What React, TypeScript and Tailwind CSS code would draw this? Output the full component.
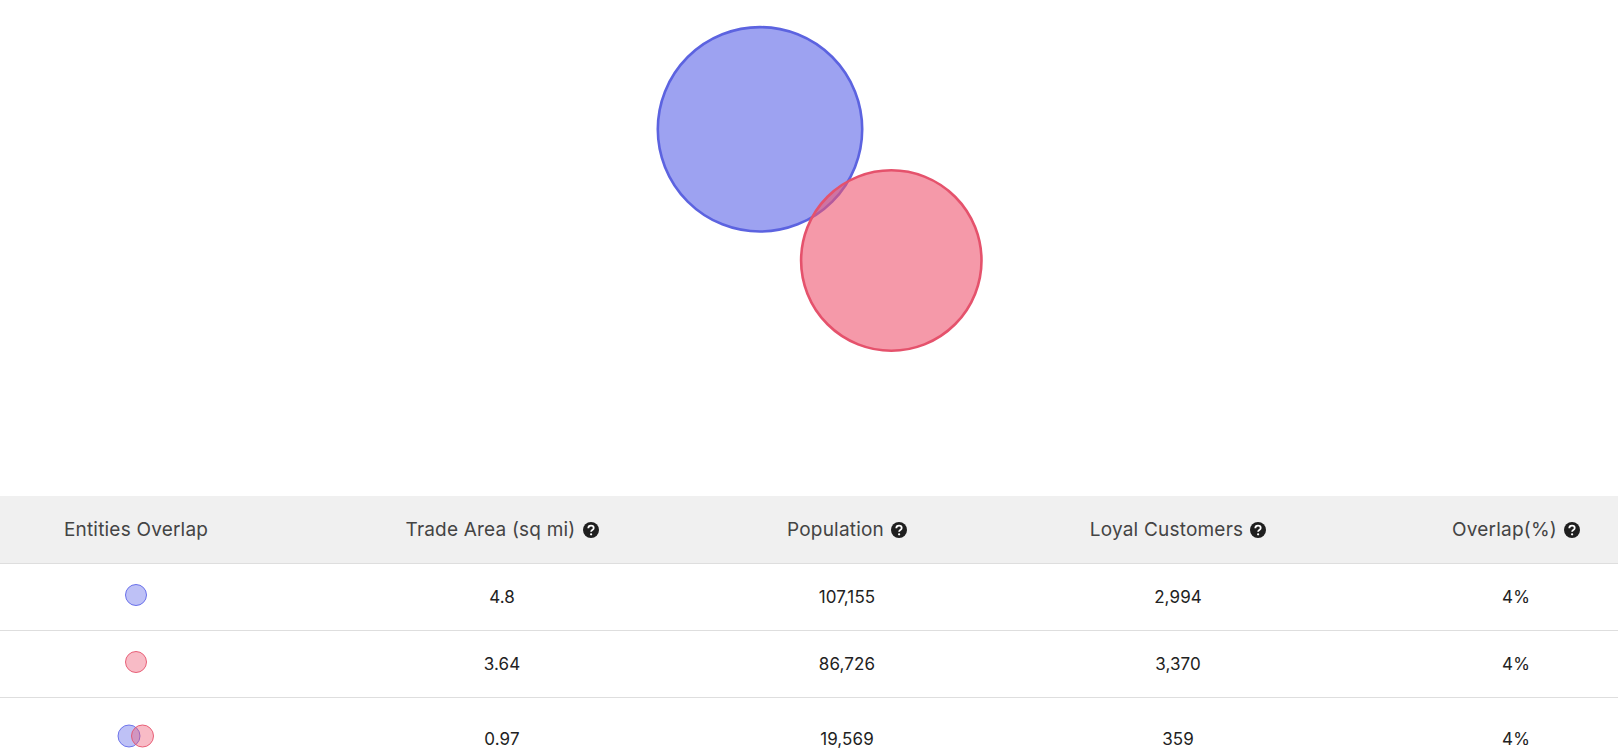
const columns = [
  { label: "Entities Overlap" },
  { label: "Trade Area (sq mi)", help: true },
  { label: "Population", help: true },
  { label: "Loyal Customers", help: true },
  { label: "Overlap(%)", help: true, last: true },
];

const rows = [
  { kind: "blue", area: "4.8", population: "107,155", loyal: "2,994", overlap: "4%" },
  { kind: "red", area: "3.64", population: "86,726", loyal: "3,370", overlap: "4%" },
  { kind: "both", area: "0.97", population: "19,569", loyal: "359", overlap: "4%" },
];

const gridCols = "grid grid-cols-[272px_460px_230px_432px_224px]";

function HelpIcon() {
  return (
    <svg viewBox="0 0 16 16" className="block size-4">
      <circle cx="8" cy="8" r="8" fill="#1f1f1f" />
      <path
        d="M5.3 6.2C5.3 4.6 6.5 3.7 8 3.7s2.7.9 2.7 2.3c0 1.1-.7 1.6-1.4 2.1-.7.5-1.2.9-1.2 1.7"
        fill="none"
        stroke="#ffffff"
        strokeWidth="1.8"
      />
      <circle cx="8.1" cy="12.3" r="1.15" fill="#ffffff" />
    </svg>
  );
}

function EntityIcon({ kind }: { kind: string }) {
  if (kind === "both") {
    return (
      <svg width="38" height="24" viewBox="0 0 38 24" className="block">
        <circle cx="12" cy="12" r="11" fill="#5c64e8" fillOpacity="0.4" stroke="#5c64e8" strokeOpacity="0.85" />
        <circle cx="25.5" cy="12" r="11" fill="#ee5570" fillOpacity="0.4" stroke="#e5526c" strokeOpacity="0.9" />
      </svg>
    );
  }
  const fill = kind === "blue" ? "#5c64e8" : "#ee5570";
  const stroke = kind === "blue" ? "#5c64e8" : "#e5526c";
  return (
    <svg width="24" height="24" viewBox="0 0 24 24" className="block">
      <circle cx="12" cy="12" r="10.5" fill={fill} fillOpacity="0.4" stroke={stroke} strokeOpacity="0.9" />
    </svg>
  );
}

export default function App() {
  return (
    <div className="h-[751px] w-full overflow-hidden bg-white font-['Inter',sans-serif]">
      <svg viewBox="0 0 1618 496" className="block h-[496px] w-full">
        <circle cx="760" cy="129.3" r="102.2" fill="#5c64e8" fillOpacity="0.6" stroke="#5c63e0" strokeWidth="2.6" />
        <circle cx="891.3" cy="260.5" r="90.2" fill="#ee5570" fillOpacity="0.6" stroke="#e5526c" strokeWidth="2.6" />
      </svg>

      <div className={`${gridCols} h-[68px] items-center border-b border-[#dedede] bg-[#f0f0f0] text-[19px] tracking-[0.2px] text-[#444444]`}>
        {columns.map((col) => (
          <div
            key={col.label}
            className={`flex items-center justify-center gap-[7px] ${col.last ? "pl-5" : ""}`}
          >
            <span className="pt-[2px]">{col.label}</span>
            {col.help && <HelpIcon />}
          </div>
        ))}
      </div>

      {rows.map((row, i) => (
        <div
          key={row.area}
          className={`${gridCols} items-center text-[17px] tracking-[0.1px] text-[#222222] ${i < 2 ? "h-[67px] border-b border-[#dedede]" : "h-[82px]"}`}
        >
          <div className={`flex justify-center ${i < 2 ? "pb-1" : "pb-[6px]"}`}>
            <EntityIcon kind={row.kind} />
          </div>
          <div className="pt-[2px] text-center">{row.area}</div>
          <div className="pt-[2px] text-center">{row.population}</div>
          <div className="pt-[2px] text-center">{row.loyal}</div>
          <div className="pl-5 pt-[2px] text-center">{row.overlap}</div>
        </div>
      ))}
    </div>
  );
}
